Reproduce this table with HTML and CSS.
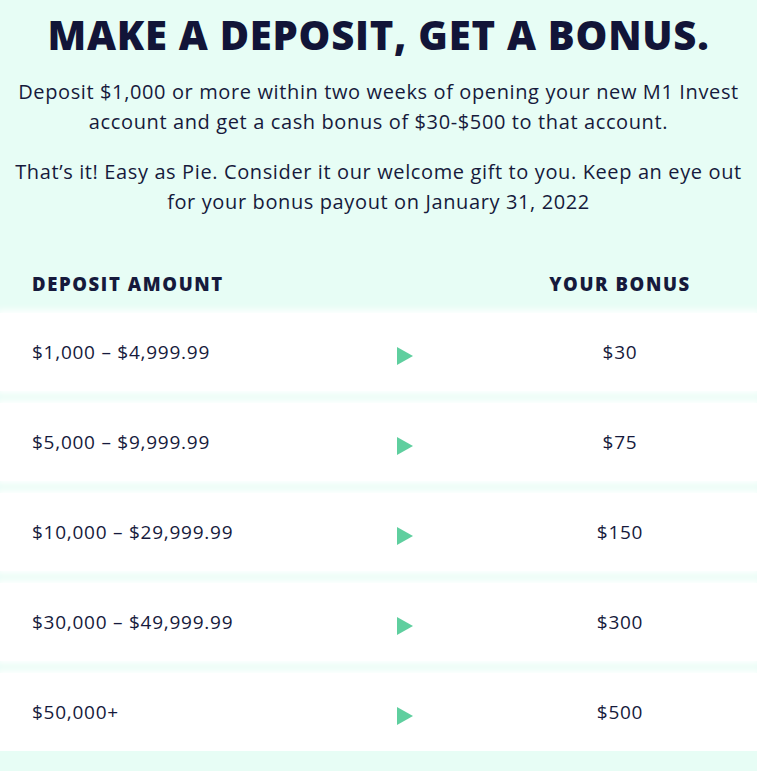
FILE: index.html
```
<!DOCTYPE html>
<html>
<head>
<meta charset="utf-8">
<link rel="stylesheet" href="styles.css">
</head>
<body>
<main class="page">
  <h1 class="title">MAKE A DEPOSIT, GET A BONUS.</h1>
  <p class="lead">Deposit $1,000 or more within two weeks of opening your new M1 Invest account and get a cash bonus of $30-$500 to that account.</p>
  <p class="lead">That’s it! Easy as Pie. Consider it our welcome gift to you. Keep an eye out for your bonus payout on January 31, 2022</p>
  <div class="table">
    <div class="head">
      <div class="c1">DEPOSIT AMOUNT</div>
      <div class="c2"></div>
      <div class="c3">YOUR BONUS</div>
    </div>
    <div class="row"><div class="c1">$1,000 – $4,999.99</div><div class="c2"><span class="arrow"></span></div><div class="c3">$30</div></div>
    <div class="row"><div class="c1">$5,000 – $9,999.99</div><div class="c2"><span class="arrow"></span></div><div class="c3">$75</div></div>
    <div class="row"><div class="c1">$10,000 – $29,999.99</div><div class="c2"><span class="arrow"></span></div><div class="c3">$150</div></div>
    <div class="row"><div class="c1">$30,000 – $49,999.99</div><div class="c2"><span class="arrow"></span></div><div class="c3">$300</div></div>
    <div class="row"><div class="c1">$50,000+</div><div class="c2"><span class="arrow"></span></div><div class="c3">$500</div></div>
  </div>
</main>
</body>
</html>
```
FILE: styles.css
```
html, body {
  margin: 0;
  padding: 0;
  background: #e7fdf5;
}
body {
  font-family: "Open Sans", "Noto Sans", sans-serif;
  color: #161a3c;
  overflow: hidden;
}
.page {
  display: flex;
  flex-direction: column;
  align-items: stretch;
}
.title {
  margin: 11px 0 0;
  text-align: center;
  font-size: 40px;
  line-height: 48px;
  font-weight: 800;
  color: #121538;
  letter-spacing: 0.75px;
}
.lead {
  margin: 18px 0 0;
  padding: 0 8px;
  text-align: center;
  font-size: 20px;
  line-height: 30px;
  font-weight: 400;
  letter-spacing: 0.62px;
}
.lead + .lead {
  margin-top: 20px;
}
.table {
  margin-top: 48px;
  display: flex;
  flex-direction: column;
  gap: 12px;
}
.head, .row {
  display: grid;
  grid-template-columns: 343px 60px 1fr;
  align-items: center;
  padding-left: 32px;
}
.head {
  height: 36px;
  font-weight: 800;
  font-size: 18.5px;
  letter-spacing: 1.6px;
}
.row {
  height: 78px;
  background: #ffffff;
  box-shadow: 0 0 7px 3px #ffffff;
  font-size: 19px;
  letter-spacing: 0.75px;
}
.c2 {
  display: flex;
  justify-content: center;
  padding-top: 8px;
}
.c3 {
  text-align: center;
  padding-left: 48px;
}
.arrow {
  width: 0;
  height: 0;
  border-top: 9px solid transparent;
  border-bottom: 9px solid transparent;
  border-left: 16px solid #5fcf9f;
}
```
